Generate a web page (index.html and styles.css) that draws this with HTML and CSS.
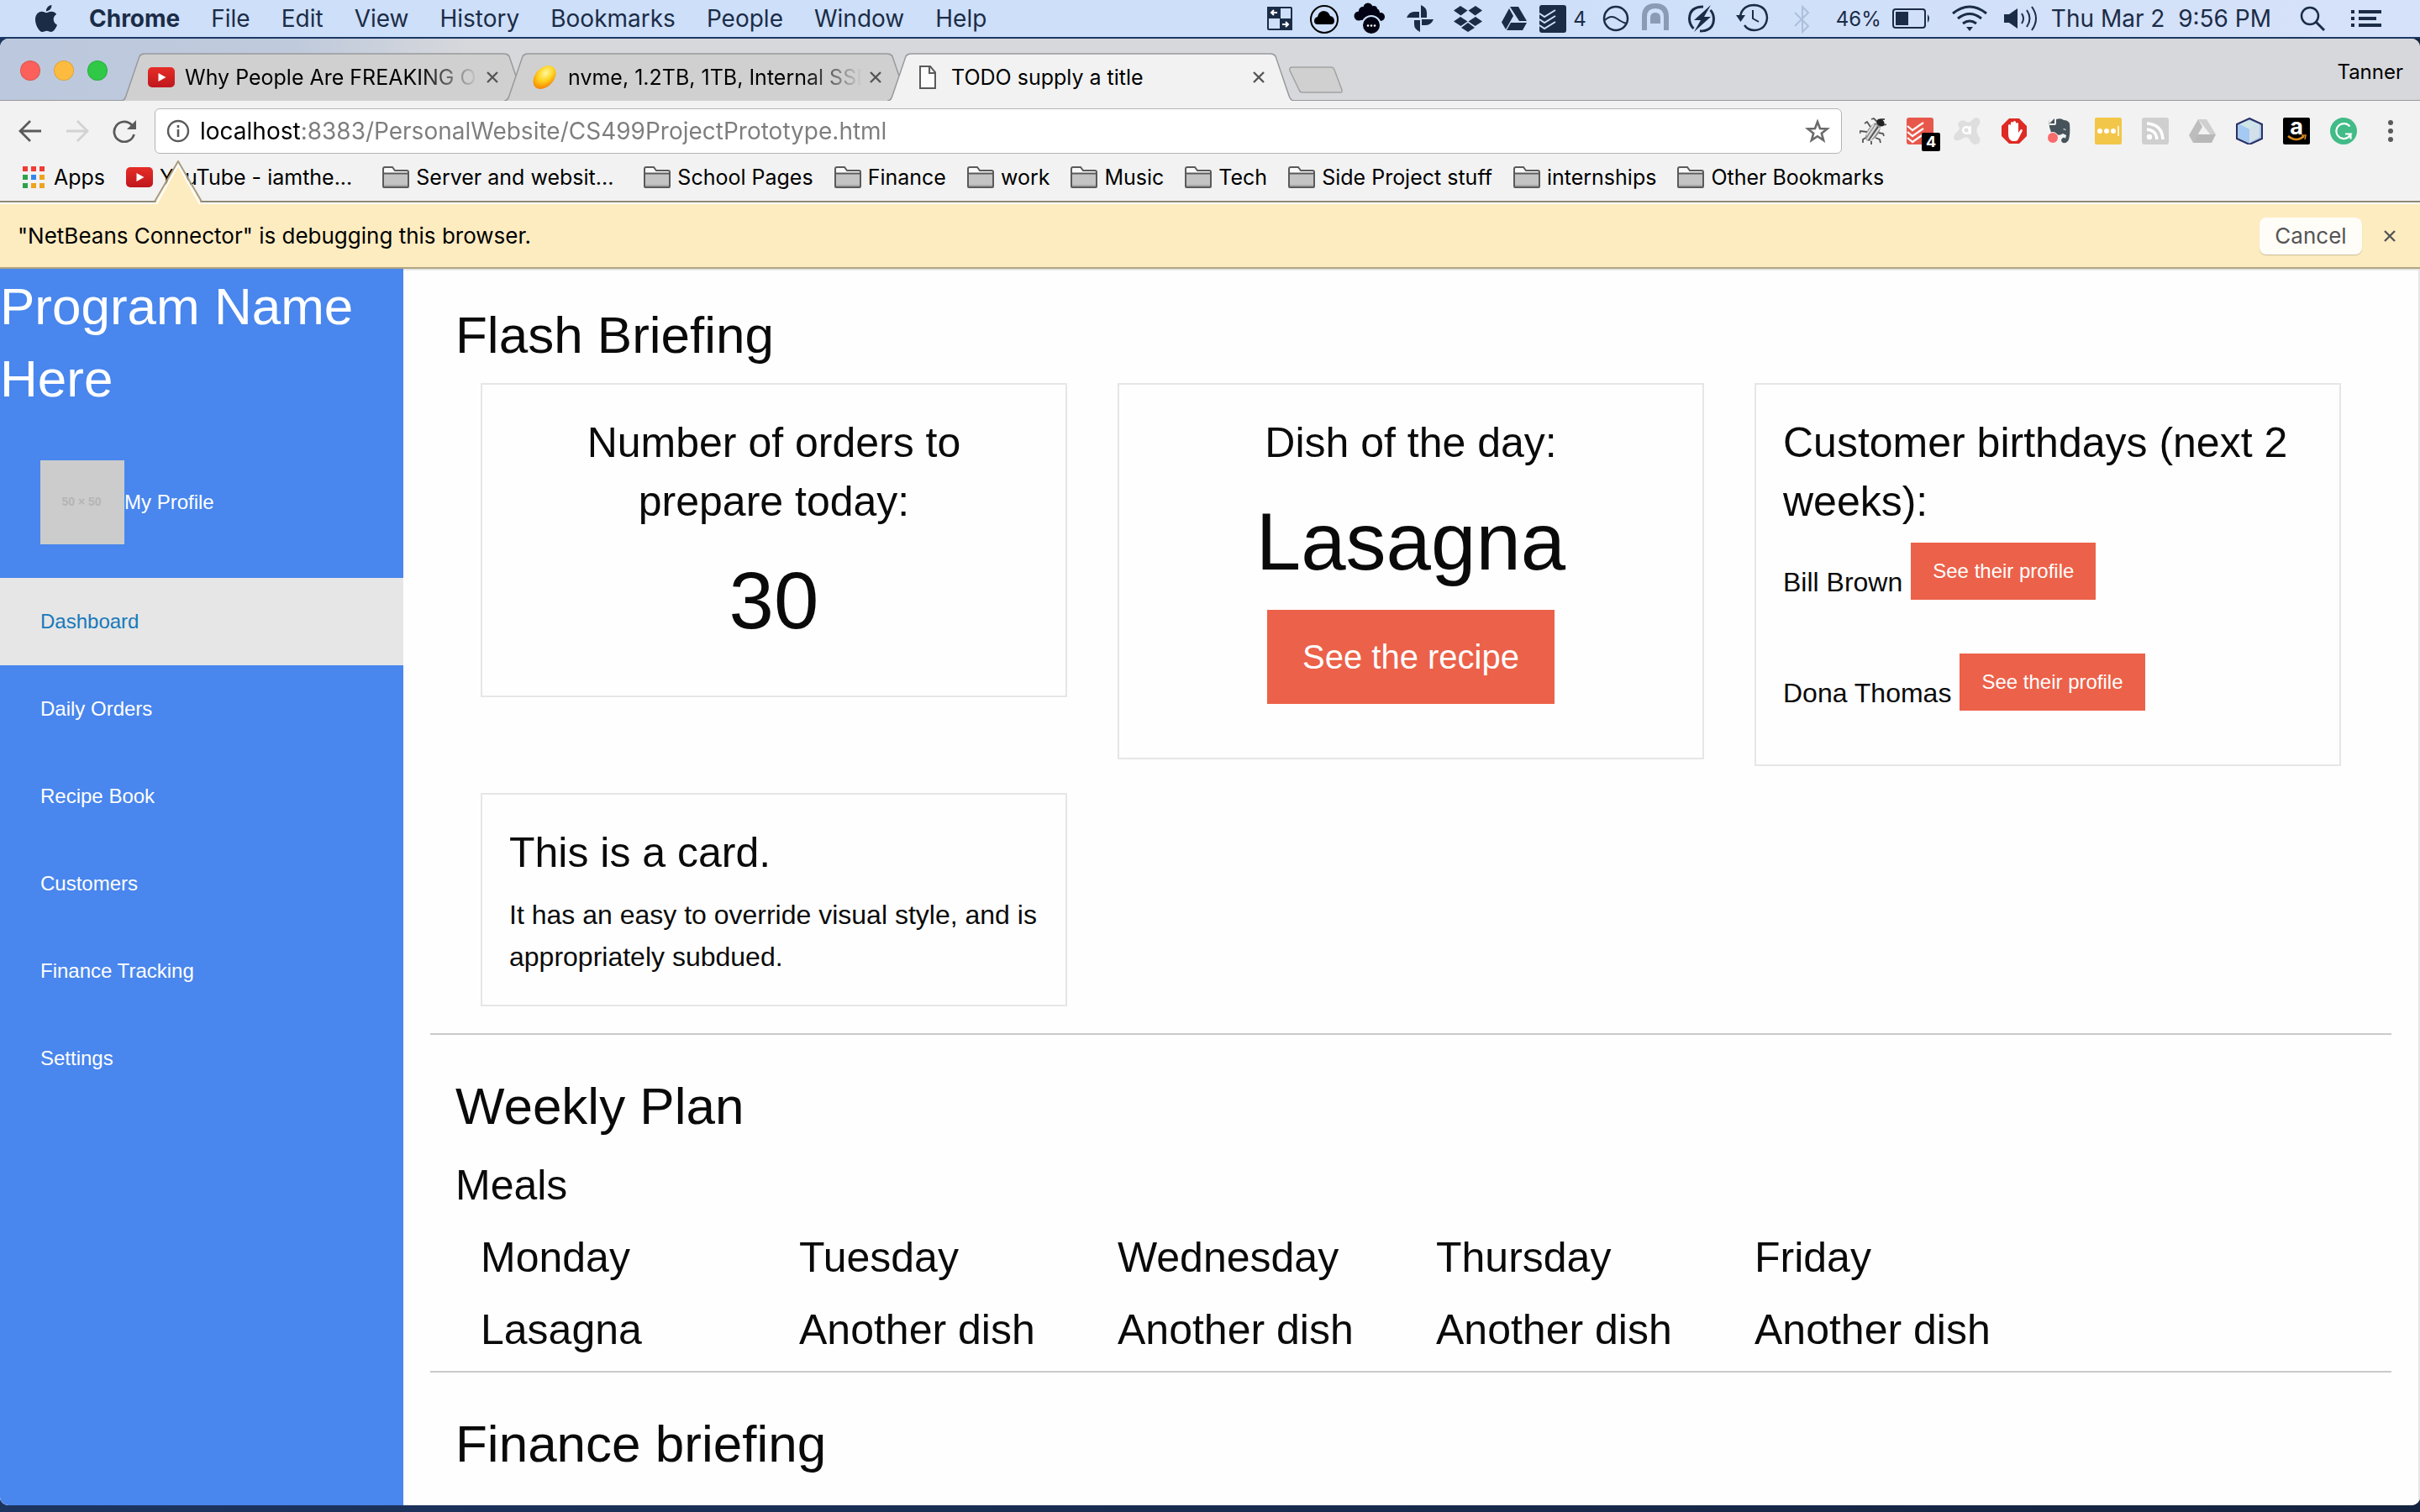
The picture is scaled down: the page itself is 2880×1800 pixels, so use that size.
FILE: index.html
```html
<!DOCTYPE html>
<html lang="en">
<head>
<meta charset="utf-8">
<title>TODO supply a title</title>
<link rel="stylesheet" href="styles.css">
</head>
<body>
<svg class="defs" aria-hidden="true">
  <defs>
    <linearGradient id="yt" x1="0" y1="0" x2="0" y2="1"><stop offset="0" stop-color="#e52d27"/><stop offset="1" stop-color="#bf171d"/></linearGradient>
    <radialGradient id="egg" cx=".4" cy=".35" r=".7"><stop offset="0" stop-color="#fff7a0"/><stop offset=".5" stop-color="#ffd21e"/><stop offset="1" stop-color="#f57c00"/></radialGradient>
    <symbol id="youtube" viewBox="0 0 32 24"><rect width="32" height="24" rx="5" fill="url(#yt)"/><path d="M12.500 7v10l9-5z" fill="#fff"/></symbol>
    <symbol id="folder" viewBox="0 0 32 26"><path d="M1 24V3q0-2 2-2h9l3 4h14q2 0 2 2v17q0 1-1 1H2q-1 0-1-1z" fill="#fafafa" stroke="#5a5a5a" stroke-width="2"/><path d="M2 9h28v15H2z" fill="#c4c4c4"/><path d="M1 8.500h30" stroke="#5a5a5a" stroke-width="2"/><path d="M2 22h28v2H2z" fill="#a8a8a8"/></symbol>
    <symbol id="cross" viewBox="0 0 16 16"><path d="M2 2l12 12M14 2L2 14" fill="none" stroke="#555" stroke-width="2.400"/></symbol>
    <symbol id="tabshape" viewBox="0 0 484 57"><path d="M0 57C4 57 5 54 6 51L22 4Q24 1 28 1H456Q460 1 462 4L478 51Q480 57 484 57" stroke="#98999d" stroke-width="1.500"/></symbol>
  </defs>
</svg>

<header class="menubar">
  <nav class="menus" aria-label="Application menu">
    <svg class="apple" viewBox="2 0 20 24"><path fill="#1b2c47" d="M12.152 6.896c-.948 0-2.415-1.078-3.960-1.040-2.040.027-3.910 1.183-4.961 3.014-2.117 3.675-.546 9.103 1.519 12.090 1.013 1.454 2.208 3.090 3.792 3.039 1.520-.065 2.090-.987 3.935-.987 1.831 0 2.350.987 3.960.948 1.637-.026 2.676-1.480 3.676-2.948 1.156-1.688 1.636-3.325 1.662-3.415-.039-.013-3.182-1.221-3.220-4.857-.026-3.040 2.480-4.494 2.597-4.559-1.429-2.090-3.623-2.324-4.390-2.376-2-.156-3.675 1.090-4.610 1.090zM15.530 3.830c.843-1.012 1.400-2.427 1.245-3.830-1.207.052-2.662.805-3.532 1.818-.780.896-1.454 2.338-1.273 3.714 1.338.104 2.715-.688 3.559-1.701"/></svg>
    <button class="menu menu-app">Chrome</button>
    <button class="menu">File</button>
    <button class="menu">Edit</button>
    <button class="menu">View</button>
    <button class="menu">History</button>
    <button class="menu">Bookmarks</button>
    <button class="menu">People</button>
    <button class="menu">Window</button>
    <button class="menu">Help</button>
  </nav>
  <div class="status">
    <svg width="51" height="44" viewBox="1504 0 51 44"><rect x="1515" y="9" width="28" height="26" rx="1" fill="none" stroke="#1b2c47" stroke-width="2"/><path d="M1514 8h16v14h-16zM1529 22h15v14h-15z" fill="#1b2c47"/><path d="M1526 15h-7m3-3l-3 3 3 3M1532 29h7m-3-3l3 3-3 3" fill="none" stroke="#fff" stroke-width="2"/></svg>
    <svg width="53" height="44" viewBox="1555 0 53 44"><circle cx="1582" cy="23" r="16" fill="none" stroke="#000" stroke-width="2"/><path d="M1574 29q-4 0-4-4t4-5q1-6 7-7 6 0 8 6 5 1 5 6 0 4-4 4z"/></svg>
    <svg width="59" height="44" viewBox="1608 0 59 44"><g fill="#020214"><circle cx="1634" cy="9" r="5.500"/><circle cx="1641" cy="11" r="4"/><circle cx="1628" cy="13" r="5"/><circle cx="1623" cy="19" r="5.500"/><circle cx="1634" cy="16" r="7"/><circle cx="1643" cy="15" r="5"/><circle cx="1649" cy="20" r="5"/><rect x="1624" y="17" width="24" height="7"/><circle cx="1638" cy="30" r="11" stroke="#cfe0f9" stroke-width="2"/></g><g fill="#fff"><circle cx="1634" cy="30.500" r="1.300"/><circle cx="1638" cy="30.500" r="1.300"/><circle cx="1642" cy="30.500" r="1.300"/></g></svg>
    <svg width="57" height="44" viewBox="1667 0 57 44"><g fill="#1b2c47"><path d="M1697 6q7 3 7 9v6h-7zM1712 23q-3 7-9 7h-5v-7zM1696 38q-7-3-7-9v-5h7zM1680 21q3-7 9-7h6v7z"/></g></svg>
    <svg width="58" height="44" viewBox="1724 0 58 44"><g fill="#1b2c47"><path d="M1744 7l8.500 5.500-8 6-8.500-6zM1762 7l-8.500 5.500 8 6 8.500-6zM1744 20l8.500 5.500-8 5.500-8.500-5.500zM1762 20l-8.500 5.500 8 5.500 8.500-5.500zM1753 27l8 6-8 5-8-5z"/></g></svg>
    <svg width="48" height="44" viewBox="1782 0 48 44"><g fill="#1b2c47"><path d="M1803 8h10l10 17h-9zM1802 10l5 9-9 16-5-8.500zM1804 27h19l-5 9h-19z"/></g></svg>
    <svg width="44" height="44" viewBox="1830 0 44 44"><rect x="1838" y="6" width="32" height="33" rx="3" fill="#1b2c47"/><path d="M1838 16l6 4 13-8M1838 23l6 4 13-8M1838 30l6 4 13-8" fill="none" stroke="#cfe0f9" stroke-width="2"/></svg>
    <span class="small-status">4</span>
    <svg width="54" height="44" viewBox="1892 0 54 44"><circle cx="1923" cy="22" r="14" fill="none" stroke="#1b2c47" stroke-width="2.500"/><path d="M1910 24q7-7 14-2t12 6" fill="none" stroke="#1b2c47" stroke-width="2"/></svg>
    <svg width="51" height="44" viewBox="1946 0 51 44"><path d="M1957 36V20q0-13 13-13t13 13v16" fill="none" stroke="#8b9ab5" stroke-width="6"/><path d="M1964 28v-7q0-6 6-6t6 6v7z" fill="#8b9ab5"/></svg>
    <svg width="56" height="44" viewBox="1997 0 56 44"><path d="M2027 8q-16 0-16.500 14 0 7 5 12M2023 37q16 0 16.500-14 0-7-4-11" fill="none" stroke="#1b2c47" stroke-width="3"/><path d="M2036 6l-20 18h8l-8 14 20-18h-8z" fill="#1b2c47"/></svg>
    <svg width="66" height="44" viewBox="2053 0 66 44"><path d="M2071 19q3-13 17-13 14 1 15 15-1 14-15 15-8 0-12-6" fill="none" stroke="#1b2c47" stroke-width="2.500"/><path d="M2066 18h11l-5.500 8z" fill="#1b2c47"/><path d="M2086 12v10l7 4" fill="none" stroke="#1b2c47" stroke-width="2"/></svg>
    <svg width="62" height="44" viewBox="2119 0 62 44"><path d="M2136 15l16 16-7 7V8l7 7-16 16" fill="none" stroke="#aebfdc" stroke-width="2"/></svg>
    <span class="small-status">46%</span>
    <svg width="68" height="44" viewBox="2240 0 68 44"><rect x="2250" y="11" width="38" height="22" rx="3" fill="none" stroke="#1b2c47" stroke-width="2"/><rect x="2253" y="14" width="15" height="16" fill="#1b2c47"/><path d="M2291 17q4 5 0 10z" fill="#1b2c47"/></svg>
    <svg width="62" height="44" viewBox="2308 0 62 44"><g fill="none" stroke="#1b2c47" stroke-width="3"><path d="M2321 16q20-16 40 0M2327 22q14-11 28 0M2333 28q8-6 16 0"/></g><path d="M2337 32h8l-4 5z" fill="#1b2c47"/></svg>
    <svg width="68" height="44" viewBox="2370 0 68 44"><path d="M2382 17h6l10-7v24l-10-7h-6z" fill="#1b2c47"/><path d="M2403 16q4 6 0 12M2409 12q7 10 0 20M2415 8q10 14 0 28" fill="none" stroke="#1b2c47" stroke-width="2"/></svg>
    <time class="clock">Thu Mar 2&nbsp; 9:56 PM</time>
    <svg width="72" height="44" viewBox="2716 0 72 44"><circle cx="2749" cy="19" r="10" fill="none" stroke="#1b2c47" stroke-width="2.500"/><path d="M2756 26l10 10" stroke="#1b2c47" stroke-width="3"/></svg>
    <svg width="92" height="44" viewBox="2788 0 92 44"><path d="M2798 14h4M2798 22h4M2798 30h4M2807 14h27M2807 22h21M2807 30h27" stroke="#1b2c47" stroke-width="4"/></svg>
  </div>
</header>

<div class="window">
  <div class="tabstrip">
    <div class="lights">
      <button class="light red" aria-label="Close"></button>
      <button class="light yellow" aria-label="Minimize"></button>
      <button class="light green" aria-label="Zoom"></button>
    </div>
    <div class="tabs">
      <div class="tab">
        <svg class="tab-bg"><use href="#tabshape"/></svg>
        <svg class="favicon" width="32" height="24"><use href="#youtube"/></svg>
        <span class="tab-title fade">Why People Are FREAKING OUT</span>
        <button class="close" aria-label="Close tab"><svg width="16" height="16"><use href="#cross"/></svg></button>
      </div>
      <div class="tab">
        <svg class="tab-bg"><use href="#tabshape"/></svg>
        <svg class="favicon" width="32" height="32" viewBox="0 0 32 32"><ellipse cx="16" cy="16" rx="11" ry="16" transform="rotate(42 16 16)" fill="url(#egg)"/></svg>
        <span class="tab-title fade">nvme, 1.2TB, 1TB, Internal SSD</span>
        <button class="close" aria-label="Close tab"><svg width="16" height="16"><use href="#cross"/></svg></button>
      </div>
      <div class="tab active">
        <svg class="tab-bg"><use href="#tabshape"/></svg>
        <svg class="favicon" width="32" height="28" viewBox="-6 0 32 28"><path d="M1 1h12l6 7v19H1zM12 1v8h7" fill="#fdfdfd" stroke="#5a5a5a" stroke-width="2"/></svg>
        <span class="tab-title">TODO supply a title</span>
        <button class="close" aria-label="Close tab"><svg width="16" height="16"><use href="#cross"/></svg></button>
      </div>
    </div>
    <button class="newtab" aria-label="New tab"><svg width="66" height="33" viewBox="0 0 66 33"><path d="M5 1h46q3 0 4 3l9 24q1 3-2 3H17q-3 0-4-3L2 5Q1 1 5 1z" fill="#d0d0d0" stroke="#a2a2a4" stroke-width="1.500"/></svg></button>
    <span class="profile">Tanner</span>
  </div>

  <div class="toolbar">
    <button class="nav" aria-label="Back"><svg width="28" height="28" viewBox="0 0 28 28"><path d="M14 2L2 14l12 12M2 14h25" fill="none" stroke="#5a5a5a" stroke-width="2.800"/></svg></button>
    <button class="nav" aria-label="Forward"><svg width="28" height="28" viewBox="0 0 28 28"><path d="M14 2l12 12-12 12M26 14H1" fill="none" stroke="#d2d2d2" stroke-width="2.800"/></svg></button>
    <button class="nav" aria-label="Reload"><svg width="28" height="28" viewBox="0 0 28 28"><path d="M23 7A12 12 0 1 0 25.500 18" fill="none" stroke="#5a5a5a" stroke-width="2.800"/><path d="M28 1v11H17z" fill="#5a5a5a"/></svg></button>
    <div class="omnibox">
      <svg width="28" height="28" viewBox="0 0 28 28"><circle cx="14" cy="14" r="12" fill="none" stroke="#5a5a5a" stroke-width="2.400"/><path d="M14 12v9M14 7v3" stroke="#5a5a5a" stroke-width="2.600"/></svg>
      <input class="url" type="text" aria-label="Address" value="localhost:8383/PersonalWebsite/CS499ProjectPrototype.html">
      <button class="star" aria-label="Bookmark this page"><svg width="30" height="28" viewBox="0 0 30 28"><path d="M15 3l3 8 8.500.400-6.700 5.300 2.300 8.200L15 20.200l-7.100 4.700 2.300-8.200-6.700-5.300L12 11z" fill="none" stroke="#6a6a6a" stroke-width="2.600"/></svg></button>
    </div>
    <div class="extensions">
      <svg viewBox="0 0 32 32"><g stroke="#555" stroke-width="1.800" fill="none"><path d="M13 11L9 5 6 7M9 17l-8-1-1 3M9 23l-5 3 0 4M14 28l0 4M19 24l5 2 1 4M22 18l6 1 1 3M21 5l-4-4-3 1M28 9l4-1M25 2l5 0"/></g><ellipse cx="16" cy="17" rx="6.500" ry="12.500" transform="rotate(35 16 17)" fill="#8f8f8f"/><path d="M20 9L9 26M24 12L13 27M17 8L8 21" stroke="#e2e2e2" stroke-width="1.800"/><path d="M22 11L11 27" stroke="#444" stroke-width="1.200"/><ellipse cx="25" cy="6" rx="5" ry="4" transform="rotate(40 25 6)" fill="#222"/></svg>
      <span class="ext-badged">
        <svg viewBox="0 0 32 32"><rect width="32" height="32" rx="3" fill="#e8574b"/><path d="M1 10l6 5 13-9M1 17l6 5 13-9M1 24l6 5 13-9" fill="none" stroke="#fff" stroke-width="2.200"/></svg>
        <span class="badge">4</span>
      </span>
      <svg viewBox="0 0 32 32"><path d="M6 6q4-5 9-1 4 2 7-2 4-5 8-2 3 4 0 8-4 5-2 9 1 4 3 6 2 6-4 8-6 0-8-6-3-4-7-2-6 4-10 3-4-3 0-8 5-4 5-7-3-3-1-6z" fill="#dedede"/><circle cx="15" cy="15" r="3.800" fill="none" stroke="#fff" stroke-width="2.600"/><path d="M19.500 10v10" stroke="#fff" stroke-width="2.600"/></svg>
      <svg viewBox="0 0 32 32"><path d="M10 1h12l9 9v12l-9 9H10l-9-9V10z" fill="#dd2b25"/><path d="M9 18V9q1.500-2 3 0v6V6q1.500-2 3 0v9V5q1.500-2 3 0v10V7q1.500-2 3 0v11l3-4q3 0 1.500 2.500l-4.500 9q-1 2.500-4 2.500h-3q-5-1-5-9z" fill="#fff"/></svg>
      <svg viewBox="0 0 32 32"><path d="M2 9h6q2 0 2-2V2q6-2 9 1 5 0 7 4 1 12-1 19-2 5-7 4-4-3 0-6 2-1 3 1l1-4q-2-1-4-2-4 3-8 1-6 1-7-6-2-4-1-12z" fill="#46535a"/><path d="M2 7l6-6v6z" fill="#46535a"/><path d="M18 14q2-2 4 1z" fill="#fff"/><circle cx="6" cy="24" r="6.500" fill="#f96c6c" stroke="#f8f8f8"/></svg>
      <svg viewBox="0 0 32 32"><rect width="32" height="32" rx="2" fill="#f2c648"/><circle cx="6" cy="16" r="3" fill="#fff"/><circle cx="14" cy="16" r="3" fill="#fff"/><circle cx="22" cy="16" r="3" fill="#fff"/><path d="M28 10v12" stroke="#fff" stroke-width="1.500"/></svg>
      <svg viewBox="0 0 32 32"><rect width="32" height="32" rx="3" fill="#cfcfcf"/><circle cx="9" cy="23" r="3.200" fill="#fff"/><path d="M6 14q11 1 12 12M6 7q18 1 19 19" fill="none" stroke="#fff" stroke-width="3.600"/></svg>
      <svg viewBox="0 0 32 32"><path d="M11 2h10l11 18-5 2z" fill="#cfcfcf"/><path d="M11 2l5 9L5 30 0 21z" fill="#bdbdbd"/><path d="M10 20h22l-5 10H5z" fill="#b8b8b8"/><path d="M16 12l5 8H11z" fill="#f2f2f2"/></svg>
      <svg viewBox="0 0 32 32"><path d="M16 1l15 7v17l-15 7L1 25V8z" fill="#a9cbe6" stroke="#2a2f66" stroke-width="2"/><path d="M16 3l12 5-12 6L4 8z" fill="#cfe6e8"/><path d="M16 14l12-6v15l-12 7z" fill="#d3e0ea"/><path d="M4 8l12 6v16L4 24z" fill="#a4c9f2"/></svg>
      <svg viewBox="0 0 32 32"><rect width="32" height="32" rx="2"/><text x="16" y="20" text-anchor="middle" class="amazon">a</text><path d="M6 22q10 8 19 0" fill="none" stroke="#d98a20" stroke-width="2.500"/><path d="M22 21h5l-1 5" fill="none" stroke="#d98a20" stroke-width="1.500"/></svg>
      <svg viewBox="0 0 32 32"><circle cx="16" cy="16" r="16" fill="#41bb87"/><path d="M23.500 10.500a9 9 0 1 0-2 13l3-4h-6.500m6.500 0v6" fill="none" stroke="#fff" stroke-width="2.200"/></svg>
    </div>
    <button class="more" aria-label="Menu"><svg width="6" height="26" viewBox="0 0 6 26"><circle cx="3" cy="3" r="3" fill="#5a5a5a"/><circle cx="3" cy="13" r="3" fill="#5a5a5a"/><circle cx="3" cy="23" r="3" fill="#5a5a5a"/></svg></button>
  </div>

  <nav class="bookmarks" aria-label="Bookmarks">
    <a href="#" class="bookmark apps"><svg width="27" height="26" viewBox="0 0 27 26"><path d="M0 0h6v6H0zM10 0h6v6h-6zM20 0h6v6h-6z" fill="#ee3d35"/><path d="M0 10h6v6H0zM0 20h6v6H0z" fill="#2fa24c"/><path d="M10 10h6v6h-6z" fill="#3287ee"/><path d="M20 10h6v6h-6zM10 20h6v6h-6zM20 20h6v6h-6z" fill="#eda41f"/></svg>Apps</a>
    <a href="#" class="bookmark clipped"><svg width="32" height="24"><use href="#youtube"/></svg>YouTube - iamthe...</a>
    <a href="#" class="bookmark clipped"><svg width="32" height="26"><use href="#folder"/></svg>Server and websit...</a>
    <a href="#" class="bookmark"><svg width="32" height="26"><use href="#folder"/></svg>School Pages</a>
    <a href="#" class="bookmark"><svg width="32" height="26"><use href="#folder"/></svg>Finance</a>
    <a href="#" class="bookmark"><svg width="32" height="26"><use href="#folder"/></svg>work</a>
    <a href="#" class="bookmark"><svg width="32" height="26"><use href="#folder"/></svg>Music</a>
    <a href="#" class="bookmark"><svg width="32" height="26"><use href="#folder"/></svg>Tech</a>
    <a href="#" class="bookmark"><svg width="32" height="26"><use href="#folder"/></svg>Side Project stuff</a>
    <a href="#" class="bookmark"><svg width="32" height="26"><use href="#folder"/></svg>internships</a>
    <a href="#" class="bookmark"><svg width="32" height="26"><use href="#folder"/></svg>Other Bookmarks</a>
  </nav>

  <div class="infobar">
    <svg class="pointer" width="58" height="52" viewBox="0 0 58 52"><path d="M1 52L29 3l28 49z" fill="#feecc1"/><path d="M3 52L29 5l26 47" fill="none" stroke="#fff" stroke-width="2"/><path d="M1 49L29 1l28 48" fill="none" stroke="#a89c80" stroke-width="2"/></svg>
    <p class="notice">"NetBeans Connector" is debugging this browser.</p>
    <button class="cancel">Cancel</button>
    <button class="close" aria-label="Dismiss"><svg width="16" height="16"><use href="#cross"/></svg></button>
  </div>

  <div class="page">
    <aside class="sidebar">
      <h1 class="program">Program Name Here</h1>
      <ul class="side-menu">
        <li><a href="#" class="side-link profile-link"><svg class="avatar" width="100" height="100" viewBox="0 0 100 100"><rect width="100" height="100" fill="#ccc"/><text x="49" y="54" text-anchor="middle" class="avatar-text">50 × 50</text></svg>My Profile</a></li>
        <li><a href="#" class="side-link current">Dashboard</a></li>
        <li><a href="#" class="side-link">Daily Orders</a></li>
        <li><a href="#" class="side-link">Recipe Book</a></li>
        <li><a href="#" class="side-link">Customers</a></li>
        <li><a href="#" class="side-link">Finance Tracking</a></li>
        <li><a href="#" class="side-link">Settings</a></li>
      </ul>
    </aside>
    <main class="content">
      <section class="section">
        <h2 class="heading">Flash Briefing</h2>
        <div class="cards">
          <article class="card centered">
            <h3 class="title">Number of orders to prepare today:</h3>
            <p class="figure">30</p>
          </article>
          <article class="card centered">
            <h3 class="title">Dish of the day:</h3>
            <p class="figure">Lasagna</p>
            <button class="action large">See the recipe</button>
          </article>
          <article class="card">
            <h3 class="title">Customer birthdays (next 2 weeks):</h3>
            <div class="people">
              <div class="person"><span class="name">Bill Brown</span><button class="action">See their profile</button></div>
              <div class="person"><span class="name">Dona Thomas</span><button class="action">See their profile</button></div>
            </div>
          </article>
          <article class="card">
            <h3 class="title">This is a card.</h3>
            <p class="text">It has an easy to override visual style, and is appropriately subdued.</p>
          </article>
        </div>
      </section>
      <section class="section">
        <h2 class="heading">Weekly Plan</h2>
        <table class="plan">
          <caption>Meals</caption>
          <thead><tr><th>Monday</th><th>Tuesday</th><th>Wednesday</th><th>Thursday</th><th>Friday</th><th></th></tr></thead>
          <tbody><tr><td>Lasagna</td><td>Another dish</td><td>Another dish</td><td>Another dish</td><td>Another dish</td><td></td></tr></tbody>
        </table>
      </section>
      <section class="section">
        <h2 class="heading">Finance briefing</h2>
      </section>
    </main>
  </div>
</div>
</body>
</html>
```
FILE: styles.css
```css
* { box-sizing: border-box; }
body {
  margin: 0;
  min-height: 100vh;
  display: flex;
  flex-direction: column;
  padding-bottom: 8px;
  background: linear-gradient(90deg, #1c3560, #14233f);
  font-family: Inter, "Liberation Sans", sans-serif;
  font-size: 26px;
  color: #000;
}
button, input { font: inherit; color: inherit; border: 0; padding: 0; margin: 0; background: none; }
a { color: inherit; text-decoration: none; }
h1, h2, h3, p, ul { margin: 0; padding: 0; font-weight: 400; }
ul { list-style: none; }
svg { display: block; flex: none; }
.defs { position: absolute; width: 0; height: 0; }

/* System menu bar */
.menubar {
  display: flex;
  justify-content: space-between;
  align-items: center;
  height: 46px;
  border-bottom: 2px solid #1c3864;
  background: linear-gradient(90deg, #cddff9 60%, #d6e2f9);
  color: #1b2c47;
  font-size: 28px;
}
.menus { display: flex; align-items: center; gap: 37px; padding-left: 41px; }
.apple { width: 28px; height: 32px; }
.menu-app { font-weight: 700; }
.status { display: flex; align-items: center; }
.small-status { padding: 0 4px; font-size: 24px; }
.clock { padding-right: 13px; white-space: nowrap; }

/* Browser window */
.window {
  flex: 1;
  display: flex;
  flex-direction: column;
  border-radius: 10px;
  overflow: hidden;
  background: #f2f2f2;
}
.tabstrip {
  display: flex;
  align-items: flex-end;
  height: 74px;
  background: linear-gradient(90deg, #bcc8dd 0, #bfcadc 350px, #d7d8dc 560px);
  box-shadow: inset 0 -1px #98999d;
}
.lights { display: flex; gap: 16px; padding: 0 16px 24px 24px; }
.light { width: 24px; height: 24px; border-radius: 50%; border: 1px solid rgba(0, 0, 0, .12); }
.red { background: #fc605b; }
.yellow { background: #fdbc40; }
.green { background: #2fc847; }
.tabs { display: flex; }
.tab {
  position: relative;
  display: flex;
  align-items: center;
  width: 484px;
  height: 57px;
  padding: 0 34px 0 32px;
}
.tab + .tab { margin-left: -28px; }
.tab-bg { position: absolute; inset: 0; width: 484px; height: 57px; fill: #d0d0d0; }
.active .tab-bg { fill: #f2f2f2; }
.favicon { position: relative; }
.tab-title {
  position: relative;
  flex: 1;
  min-width: 0;
  margin: 0 8px 0 12px;
  overflow: hidden;
  white-space: nowrap;
  font-size: 25px;
}
.fade { -webkit-mask-image: linear-gradient(90deg, #000 80%, transparent); mask-image: linear-gradient(90deg, #000 80%, transparent); }
.close { position: relative; display: block; }
.newtab { margin: 0 0 8px -7px; }
.profile { margin: 0 20px 20px auto; font-size: 24px; }

.toolbar { display: flex; align-items: center; height: 72px; padding: 0 32px 0 22px; }
.nav { margin-right: 28px; }
.omnibox {
  flex: 1;
  display: flex;
  align-items: center;
  gap: 12px;
  height: 54px;
  margin: 0 21px 0 -6px;
  padding: 0 13px;
  border: 1px solid #b4b4b4;
  border-radius: 6px;
  background: #fff;
}
.url {
  flex: 1;
  min-width: 0;
  height: 40px;
  outline: 0;
  font-size: 28px;
  color: transparent;
  background: linear-gradient(90deg, #000 121px, #7d7d7d 121px);
  -webkit-background-clip: text;
  background-clip: text;
}
.extensions { display: flex; gap: 24px; }
.extensions svg { width: 32px; height: 32px; }
.ext-badged { position: relative; }
.badge {
  position: absolute;
  left: 18px;
  top: 18px;
  width: 22px;
  height: 22px;
  border-radius: 2px;
  background: #000;
  color: #fff;
  font-size: 18px;
  font-weight: 700;
  line-height: 22px;
  text-align: center;
}
.amazon { fill: #fff; font-size: 27px; font-weight: 700; }
.more { margin-left: 37px; }

.bookmarks {
  display: flex;
  align-items: center;
  gap: 25px;
  height: 47px;
  padding: 0 27px 9px;
  font-size: 25px;
}
.bookmark { display: flex; align-items: center; gap: 8px; white-space: nowrap; }
.apps { gap: 10px; }
.clipped { padding-right: 11px; }

.infobar {
  position: relative;
  display: flex;
  align-items: center;
  height: 81px;
  padding: 2px 28px 0 21px;
  border-top: 2px solid #8f8874;
  border-bottom: 2px solid #b0a482;
  background: #feecc1;
  box-shadow: inset 0 2px #fff;
}
.pointer { position: absolute; left: 183px; top: -50px; }
.notice { flex: 1; }
.cancel {
  width: 122px;
  height: 44px;
  margin-right: 25px;
  border-radius: 8px;
  background: #fffdf8;
  box-shadow: 0 1px 1px #c9bc98;
  color: #555;
}

/* Web page */
.page {
  flex: 1;
  display: flex;
  background: #fefefe;
  font-family: "Liberation Sans", Arial, sans-serif;
  font-size: 32px;
  color: #0a0a0a;
}
.sidebar { width: 480px; background: #4986ed; color: #fff; }
.program { padding-top: 2px; font-size: 62px; line-height: 86px; }
.side-menu { padding-top: 14px; font-size: 24px; line-height: 24px; }
.side-link { display: flex; align-items: center; padding: 40px 48px; }
.current { background: #e6e6e6; color: #1779ba; }
.avatar-text { font-size: 14px; font-weight: 700; fill: #b5b5b5; }

.content { flex: 1; min-width: 0; padding: 0 32px; border-top: 2px solid #e6e6e6; border-right: 2px solid #e6e6e6; }
.section { padding: 42px 30px 0; }
.section:first-child { padding-top: 34px; }
.section:not(:last-child) { border-bottom: 2px solid #cacaca; }
.heading { font-size: 62px; line-height: 86px; }
.cards {
  display: grid;
  grid-template-columns: repeat(3, 1fr);
  align-items: start;
  gap: 32px 60px;
  padding: 14px 30px 32px;
}
.card { padding: 34px 32px 32px; border: 2px solid #e6e6e6; }
.centered { text-align: center; }
.title { margin-bottom: 14px; font-size: 50px; line-height: 70px; }
.figure { margin: 16px 0 14px; font-size: 96px; line-height: 134px; }
.text { line-height: 50px; }
.action {
  display: inline-block;
  height: 68px;
  padding: 0 26px;
  background: #ec6149;
  color: #fefefe;
  font-size: 24px;
  line-height: 68px;
}
.large { display: block; height: 112px; margin: 0 auto 32px; padding: 0 42px; font-size: 40px; line-height: 112px; }
.people { display: grid; gap: 64px; padding-bottom: 32px; }
.person { display: flex; gap: 10px; height: 68px; }
.name { padding-top: 22px; line-height: 50px; }

.plan { width: 100%; table-layout: fixed; border-collapse: collapse; font-size: 50px; line-height: 70px; }
.plan caption { padding: 16px 0 8px; text-align: left; }
.plan th, .plan td { padding: 8px 0 8px 30px; text-align: left; font-weight: 400; white-space: nowrap; }
.plan tbody td { padding-bottom: 14px; }
```
